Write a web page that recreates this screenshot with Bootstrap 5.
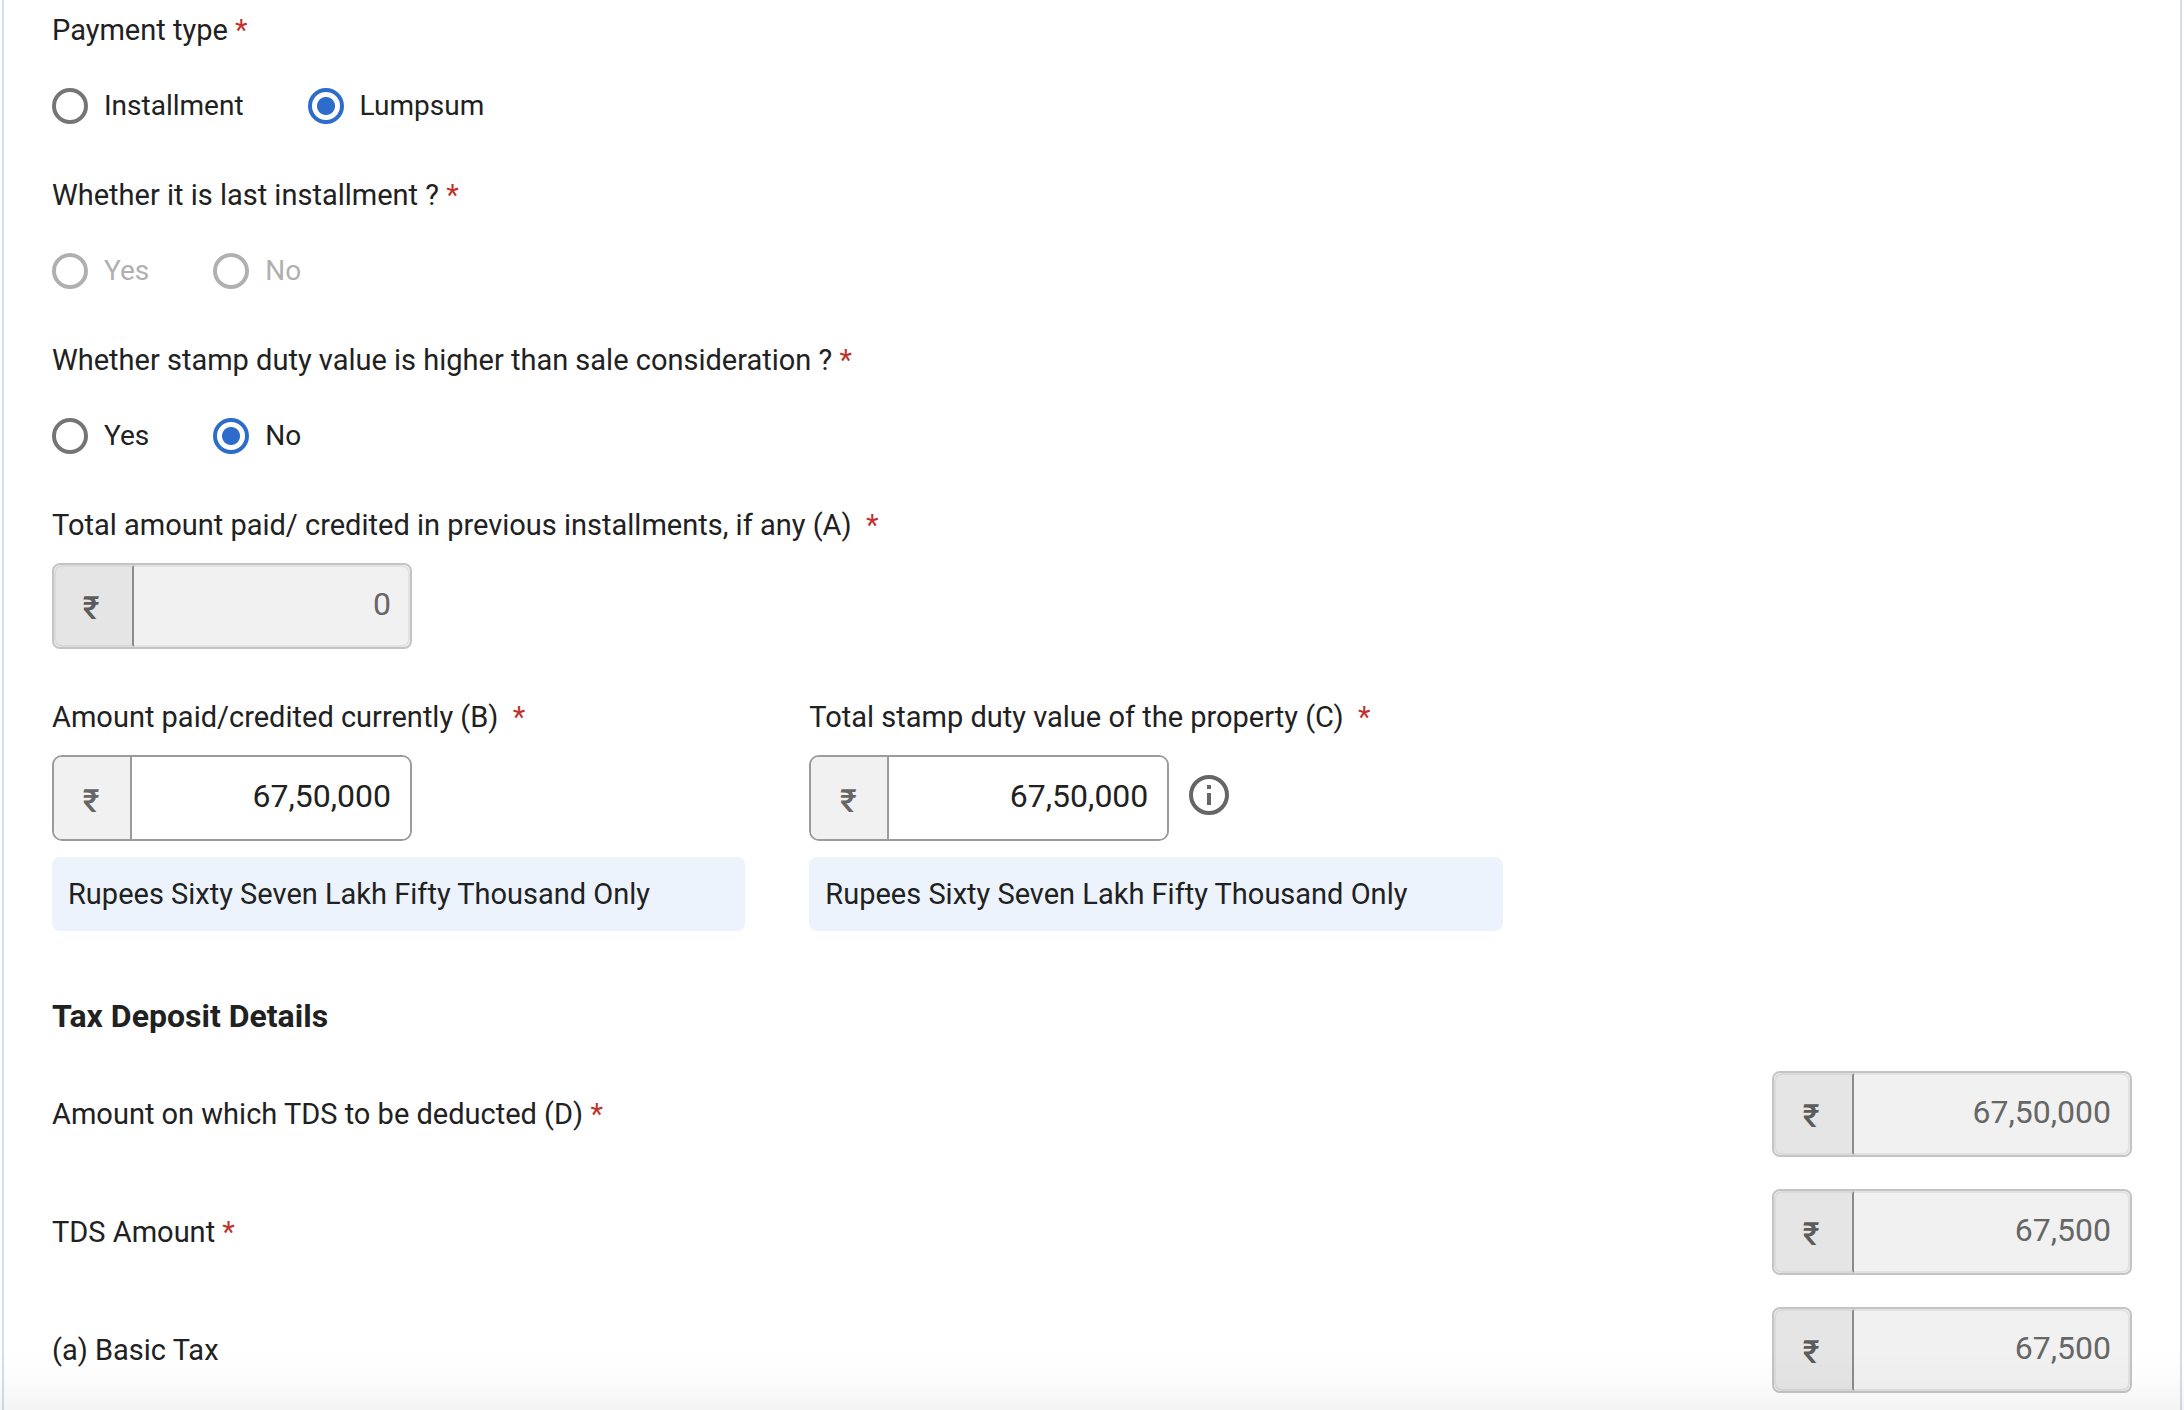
<!DOCTYPE html>
<html lang="en">
<head>
<meta charset="utf-8">
<meta name="viewport" content="width=device-width, initial-scale=1">
<title>Payment details</title>
<link href="https://cdn.jsdelivr.net/npm/bootstrap@5.3.0/dist/css/bootstrap.min.css" rel="stylesheet">
<script src="https://cdn.jsdelivr.net/npm/bootstrap@5.3.0/dist/js/bootstrap.bundle.min.js"></script>
<style>
  body { font-family: Roboto, "Liberation Sans", sans-serif; font-size: 28px; line-height: 40px; color: #212121; background: #fff; }
  .form-panel { margin: 0 2px; padding: 10px 48px 16px; border: solid #d8dbec; border-width: 0 2px; min-height: 100vh; }
  .req { color: #c0312d; }
  .field-label { display: block; float: none; font-size: 29px; line-height: 40px; margin: 0; padding: 0; width: auto; }
  .choice-group { margin-bottom: 49px; }
  .choices { gap: 64px; padding-top: 36px; }
  .choice { display: flex; align-items: center; gap: 16px; margin: 0; padding: 0; min-height: 0; }
  .choice .form-check-input { float: none; margin: 0; width: 36px; height: 36px; border: 4px solid #757575; background: #fff; flex: none; }
  .choice .form-check-input:checked { border-color: #2d6ccb; background: radial-gradient(circle, #2d6ccb 8.5px, #fff 9.5px); }
  .choice .form-check-input:disabled, .choice .form-check-input:disabled ~ .form-check-label { opacity: 1; }
  .choice .form-check-input:disabled { border-color: #b0b0b0; }
  .choice .form-check-input:disabled ~ .form-check-label { color: #b0b0b0; }
  .money { width: 360px; height: 86px; border: 2px solid #9b9b9b; border-radius: 10px; flex: none; flex-wrap: nowrap; }
  .money .input-group-text { justify-content: center; width: 78px; padding: 6px 2px 0 0; border: 0; border-right: 2px solid #9b9b9b; border-radius: 8px 0 0 8px; background: #f1f1f1; color: #666; font-size: 32px; font-weight: 500; line-height: 40px; }
  .money > .form-control { margin-left: 0 !important; border: 0; border-radius: 0 8px 8px 0; padding: 0 19px 4px; text-align: right; font-size: 32px; line-height: 40px; color: #212121; background: #fff; }
  .money-off { border-color: #c4c4c4; border-radius: 8px; background: #f8f8f8; }
  .money-off .input-group-text { width: 80px; background: #e5e5e5; color: #5c5c5c; border: 2px solid #dadada; border-right-color: #8c8c8c; padding: 4px 6px 0 0; }
  .money-off > .form-control:disabled { background: #f1f1f1; color: #666; border: 2px solid #e2e2e2; border-left: 0; padding: 0 17px 4px; }
  .amount-row { gap: 64px; padding-top: 48px; }
  .amount-col { width: 33.3333%; }
  .stack { gap: 18px; }
  .words { margin-top: 16px; padding: 17px 16px; background: #ecf3fc; border-radius: 8px; font-size: 29px; }
  .info-btn { width: 40px; height: 40px; margin-left: 20px; margin-bottom: 6px; padding: 0; line-height: 0; border: 0; }
  .section-title { font-size: 32px; line-height: 40px; font-weight: 700; margin: 65px 0 35px; }
  .tax-list { display: flex; flex-direction: column; gap: 32px; }
  .bottom-fade { height: 60px; pointer-events: none; background: linear-gradient(rgba(0,0,0,0), rgba(0,0,0,.012) 50%, rgba(0,0,0,.045)); }
</style>
</head>
<body>
<main>
<form class="form-panel">
  <fieldset class="choice-group">
    <legend class="field-label">Payment type <span class="req">*</span></legend>
    <div class="choices d-flex">
      <div class="form-check choice"><input class="form-check-input" type="radio" name="ptype" id="pt1"><label class="form-check-label" for="pt1">Installment</label></div>
      <div class="form-check choice"><input class="form-check-input" type="radio" name="ptype" id="pt2" checked><label class="form-check-label" for="pt2">Lumpsum</label></div>
    </div>
  </fieldset>
  <fieldset class="choice-group">
    <legend class="field-label">Whether it is last installment ? <span class="req">*</span></legend>
    <div class="choices d-flex">
      <div class="form-check choice"><input class="form-check-input" type="radio" name="last" id="li1" disabled><label class="form-check-label" for="li1">Yes</label></div>
      <div class="form-check choice"><input class="form-check-input" type="radio" name="last" id="li2" disabled><label class="form-check-label" for="li2">No</label></div>
    </div>
  </fieldset>
  <fieldset class="choice-group">
    <legend class="field-label">Whether stamp duty value is higher than sale consideration ? <span class="req">*</span></legend>
    <div class="choices d-flex">
      <div class="form-check choice"><input class="form-check-input" type="radio" name="stamp" id="sd1"><label class="form-check-label" for="sd1">Yes</label></div>
      <div class="form-check choice"><input class="form-check-input" type="radio" name="stamp" id="sd2" checked><label class="form-check-label" for="sd2">No</label></div>
    </div>
  </fieldset>

  <div class="d-flex flex-column stack">
    <label class="field-label" for="amtA">Total amount paid/ credited in previous installments, if any (A)&nbsp; <span class="req">*</span></label>
    <div class="input-group money money-off"><span class="input-group-text">₹</span><input class="form-control" id="amtA" type="text" value="0" disabled></div>
  </div>

  <div class="amount-row d-flex">
    <div class="amount-col">
      <div class="d-flex flex-column stack">
        <label class="field-label" for="amtB">Amount paid/credited currently (B)&nbsp; <span class="req">*</span></label>
        <div class="input-group money"><span class="input-group-text">₹</span><input class="form-control" id="amtB" type="text" value="67,50,000"></div>
      </div>
      <div class="words">Rupees Sixty Seven Lakh Fifty Thousand Only</div>
    </div>
    <div class="amount-col">
      <div class="d-flex flex-column stack">
        <label class="field-label" for="amtC">Total stamp duty value of the property (C)&nbsp; <span class="req">*</span></label>
        <div class="d-flex align-items-center">
          <div class="input-group money"><span class="input-group-text">₹</span><input class="form-control" id="amtC" type="text" value="67,50,000"></div>
          <button type="button" class="btn info-btn" aria-label="Information">
            <svg width="40" height="40" viewBox="0 0 40 40" fill="none"><circle cx="20" cy="20" r="18" stroke="#666" stroke-width="4"/><path d="M18 10h4v4h-4zM18 18h4v12h-4z" fill="#666"/></svg>
          </button>
        </div>
      </div>
      <div class="words">Rupees Sixty Seven Lakh Fifty Thousand Only</div>
    </div>
  </div>

  <h2 class="section-title">Tax Deposit Details</h2>
  <div class="tax-list">
    <div class="d-flex justify-content-between align-items-center">
      <label class="field-label" for="taxD">Amount on which TDS to be deducted (D) <span class="req">*</span></label>
      <div class="input-group money money-off"><span class="input-group-text">₹</span><input class="form-control" id="taxD" type="text" value="67,50,000" disabled></div>
    </div>
    <div class="d-flex justify-content-between align-items-center">
      <label class="field-label" for="tds">TDS Amount <span class="req">*</span></label>
      <div class="input-group money money-off"><span class="input-group-text">₹</span><input class="form-control" id="tds" type="text" value="67,500" disabled></div>
    </div>
    <div class="d-flex justify-content-between align-items-center">
      <label class="field-label" for="basic">(a) Basic Tax</label>
      <div class="input-group money money-off"><span class="input-group-text">₹</span><input class="form-control" id="basic" type="text" value="67,500" disabled></div>
    </div>
  </div>
</form>
</main>
<div class="bottom-fade fixed-bottom"></div>
</body>
</html>
